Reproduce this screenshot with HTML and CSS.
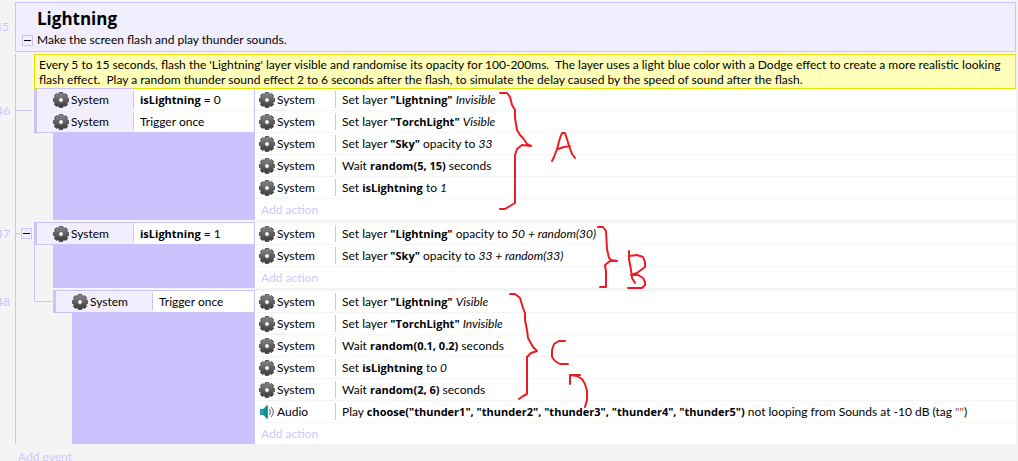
FILE: index.html
```
<!DOCTYPE html>
<html lang="en">
<head>
<meta charset="utf-8">
<title>Event sheet</title>
<link rel="stylesheet" href="styles.css">
</head>
<body>
<svg class="defs" aria-hidden="true">
  <defs>
    <linearGradient id="metal" x1="0" y1="0" x2="0" y2="1">
      <stop offset="0" stop-color="#8a8a8a"/>
      <stop offset="1" stop-color="#383838"/>
    </linearGradient>
    <linearGradient id="teal" x1="0" y1="0" x2="1" y2="0">
      <stop offset="0" stop-color="#12b4c4"/>
      <stop offset="1" stop-color="#0a8496"/>
    </linearGradient>
    <symbol id="gear" viewBox="0 0 16 16">
      <path fill="url(#metal)" stroke="#404040" stroke-width=".8" stroke-linejoin="round" d="M6.300 .5h3.400l.4 1.500 1 .4 1.500-.8 2 2-.8 1.500.4 1 1.500.3v3.200l-1.500.4-.4 1 .8 1.500-2 2-1.500-.8-1 .4-.4 1.500H6.300l-.4-1.500-1-.4-1.500.8-2-2 .8-1.500-.4-1L.5 9.600V6.400L1.900 6.100l.4-1-.8-1.500 2-2 1.500.8 1-.4z"/>
      <circle cx="8" cy="8" r="2.400" fill="#fff" stroke="#4a4a4a" stroke-width=".8"/>
    </symbol>
    <symbol id="speaker" viewBox="0 0 16 16">
      <path fill="url(#teal)" stroke="#12707c" stroke-width=".8" stroke-linejoin="round" d="M1.400 5.400h2.800L8.300 1.400v13.200L4.200 10.600H1.400z"/>
      <path fill="none" stroke="#777" stroke-width="1.200" stroke-linecap="round" d="M10.500 5.500q1.700 2.500 0 5M12.500 3.500q3.600 4.500 0 9"/>
    </symbol>
  </defs>
</svg>
<main class="sheet">
  <section class="group">
    <span class="number">45</span>
    <div class="group-box">
      <h1 class="group-title">Lightning</h1>
      <button class="toggle" type="button" aria-label="Collapse group"></button>
      <p class="group-text">Make the screen flash and play thunder sounds.</p>
    </div>
  </section>

  <div class="events">
    <p class="comment">Every 5 to 15 seconds, flash the 'Lightning' layer visible and randomise its opacity for 100-200ms.&nbsp; The layer uses a light blue color with a Dodge effect to create a more realistic looking flash effect.&nbsp; Play a random thunder sound effect 2 to 6 seconds after the flash, to simulate the delay caused by the speed of sound after the flash.</p>

    <article class="event">
      <div class="left">
        <div class="head">
          <span class="number">46</span>
          <span class="lead"><span class="tick"></span></span>
          <div class="conditions">
            <div class="condition"><span class="object"><svg class="icon"><use href="#gear"/></svg>System</span><span class="test"><b>isLightning</b> = 0</span></div>
            <div class="condition"><span class="object"><svg class="icon"><use href="#gear"/></svg>System</span><span class="test">Trigger once</span></div>
          </div>
        </div>
        <div class="body"><span class="fill"></span></div>
      </div>
      <div class="actions">
        <div class="action"><span class="object"><svg class="icon"><use href="#gear"/></svg>System</span><span class="task">Set layer <b>"Lightning"</b> <i>Invisible</i></span></div>
        <div class="action"><span class="object"><svg class="icon"><use href="#gear"/></svg>System</span><span class="task">Set layer <b>"TorchLight"</b> <i>Visible</i></span></div>
        <div class="action"><span class="object"><svg class="icon"><use href="#gear"/></svg>System</span><span class="task">Set layer <b>"Sky"</b> opacity to <i>33</i></span></div>
        <div class="action"><span class="object"><svg class="icon"><use href="#gear"/></svg>System</span><span class="task">Wait <b>random(5, 15)</b> seconds</span></div>
        <div class="action"><span class="object"><svg class="icon"><use href="#gear"/></svg>System</span><span class="task">Set <b>isLightning</b> to <i>1</i></span></div>
        <div class="action"><button class="add" type="button">Add action</button></div>
      </div>
    </article>

    <article class="event">
      <div class="left">
        <div class="head">
          <span class="number">47</span>
          <span class="lead"><span class="tick"></span><button class="toggle" type="button" aria-label="Collapse event"></button></span>
          <div class="conditions">
            <div class="condition"><span class="object"><svg class="icon"><use href="#gear"/></svg>System</span><span class="test"><b>isLightning</b> = 1</span></div>
          </div>
        </div>
        <div class="body parent"><span class="fill"></span></div>
      </div>
      <div class="actions">
        <div class="action"><span class="object"><svg class="icon"><use href="#gear"/></svg>System</span><span class="task">Set layer <b>"Lightning"</b> opacity to <i>50 + random(30)</i></span></div>
        <div class="action"><span class="object"><svg class="icon"><use href="#gear"/></svg>System</span><span class="task">Set layer <b>"Sky"</b> opacity to <i>33 + random(33)</i></span></div>
        <div class="action"><button class="add" type="button">Add action</button></div>
      </div>
    </article>

    <article class="event child">
      <div class="left">
        <div class="head">
          <span class="number">48</span>
          <span class="lead"></span>
          <span class="elbow"></span>
          <div class="conditions">
            <div class="condition"><span class="object"><svg class="icon"><use href="#gear"/></svg>System</span><span class="test">Trigger once</span></div>
          </div>
        </div>
        <div class="body"><span class="fill"></span></div>
      </div>
      <div class="actions">
        <div class="action"><span class="object"><svg class="icon"><use href="#gear"/></svg>System</span><span class="task">Set layer <b>"Lightning"</b> <i>Visible</i></span></div>
        <div class="action"><span class="object"><svg class="icon"><use href="#gear"/></svg>System</span><span class="task">Set layer <b>"TorchLight"</b> <i>Invisible</i></span></div>
        <div class="action"><span class="object"><svg class="icon"><use href="#gear"/></svg>System</span><span class="task">Wait <b>random(0.1, 0.2)</b> seconds</span></div>
        <div class="action"><span class="object"><svg class="icon"><use href="#gear"/></svg>System</span><span class="task">Set <b>isLightning</b> to <i>0</i></span></div>
        <div class="action"><span class="object"><svg class="icon"><use href="#gear"/></svg>System</span><span class="task">Wait <b>random(2, 6)</b> seconds</span></div>
        <div class="action"><span class="object"><svg class="icon"><use href="#speaker"/></svg>Audio</span><span class="task">Play <b>choose("thunder1", "thunder2", "thunder3", "thunder4", "thunder5")</b> not looping from Sounds at -10 dB (tag <span class="string">""</span>)</span></div>
        <div class="action"><button class="add" type="button">Add action</button></div>
      </div>
    </article>
  </div>
  <button class="add add-event" type="button">Add event</button>

  <svg class="marks" width="1018" height="461" viewBox="0 0 1018 461" role="img" aria-label="Handwritten notes A, B and C">
    <path d="M500 93L507 93L510 97L512 105L515 110L515 118L517 130L520 135L523 138L527 144L531 146L522 145L517 149L515 155L515 203L510 206L505 209L500 209"/>
    <path d="M552 161L554 157L557 149L560 138L562 133L565 133L567 139L569 146L572 154L575 158M558 149L564 147L570 146"/>
    <path d="M598 227L603 227L606 231L607 249L609 258L611 260L617 261L610 261L605 265L606 272L606 287L600 287"/>
    <path d="M629 251L629 259L631 270L632 278L635 283M629 256L637 255L643 257L645 262L645 267L641 270L637 273L631 275L638 275L643 278L645 282L645 285L642 288L628 288"/>
    <path d="M510 294L515 294L520 298L523 308L525 313L525 320L527 330L528 338L533 347L537 351L531 353L527 357L527 394L523 396L519 399"/>
    <path d="M565 341L559 341L554 344L552 350L552 357L555 361L560 364L568 364"/>
    <path d="M585 407L587 400L587 391L585 384L582 379L577 376L570 375L570 384M570 375L580 375"/>
  </svg>
</main>
</body>
</html>
```
FILE: styles.css
```
:root {
  --line: #ccc3fe;
  --soft: #f1effe;
  --page: #f4f4f4;
}

* {
  box-sizing: border-box;
}

html {
  overflow: hidden;
}

body {
  margin: 0;
  background: var(--page);
  color: #000;
  font: 12px/16px Lato, "Open Sans", sans-serif;
}

h1,
p {
  margin: 0;
}

b {
  font-family: "Open Sans", sans-serif;
  font-size: 11px;
}

button {
  padding: 0;
  border: 0;
  background: none;
  font: inherit;
}

.defs {
  position: absolute;
  width: 0;
  height: 0;
}

.sheet {
  position: relative;
  padding: 2px 2px 0 15px;
}

.number {
  flex: none;
  width: 16px;
  margin: 0 6px 0 -22px;
  color: var(--line);
  text-align: right;
}

/* Group header */

.group {
  display: flex;
  align-items: center;
}

.group-box {
  flex: 1;
  display: grid;
  grid-template-columns: 11px 1fr;
  gap: 1px 4px;
  align-items: center;
  padding: 3px 6px;
  border: 1px solid var(--line);
  background: var(--soft);
}

.group-title {
  grid-column: 2;
  font-family: "Open Sans", sans-serif;
  font-size: 17px;
  line-height: 25px;
}

.toggle {
  display: flex;
  align-items: center;
  justify-content: center;
  width: 11px;
  height: 11px;
  border: 1px solid var(--line);
  background: var(--soft);
}

.toggle::before {
  content: "";
  width: 7px;
  height: 1px;
  background: #000;
}

/* Events */

.events {
  display: flex;
  flex-direction: column;
  gap: 2px;
  margin-top: 2px;
  border-left: 1px solid var(--line);
}

.comment {
  position: relative;
  margin: 0 0 -3px 18px;
  padding: 2px 4px 1px;
  border: 1px solid #e6e600;
  background: #ffffb9;
  line-height: 15px;
}

.event {
  display: flex;
}

.left {
  flex: none;
  display: flex;
  flex-direction: column;
  width: 239px;
}

.head {
  display: flex;
  align-items: center;
}

.lead {
  flex: none;
  display: flex;
  align-items: center;
  gap: 1px;
  width: 18px;
  padding-right: 2px;
}

.tick {
  flex: 1;
  height: 1px;
  background: var(--line);
}

.elbow {
  flex: none;
  align-self: flex-start;
  width: 18px;
  height: 14px;
  margin: -2px 1px 0 0;
  border: solid var(--line);
  border-width: 0 0 1px 1px;
}

.conditions {
  flex: 1;
  border: solid var(--line);
  border-width: 0 1px 1px 3px;
  background: var(--soft);
}

.condition {
  display: flex;
  height: 22px;
}

.condition .object {
  width: 97px;
  padding-left: 16px;
  border-top: 1px solid var(--soft);
}

.test {
  flex: 1;
  padding-left: 6px;
  border-top: 1px solid var(--page);
  background: #fff;
  line-height: 22px;
}

.condition:first-child > * {
  border-top-color: var(--line);
}

.object {
  position: relative;
  flex: none;
  display: flex;
  align-items: center;
  gap: 2px;
}

.object::after {
  content: "";
  position: absolute;
  top: 2px;
  right: 0;
  bottom: 2px;
  width: 1px;
  background: var(--line);
}

.icon {
  flex: none;
  width: 16px;
  height: 16px;
}

.body {
  flex: 1;
  display: flex;
  padding-left: 37px;
}

.child .body {
  padding-left: 56px;
}

.parent {
  position: relative;
}

.parent::before {
  content: "";
  position: absolute;
  top: 0;
  bottom: 0;
  left: 18px;
  width: 1px;
  background: var(--line);
}

.fill {
  flex: 1;
  background: var(--line);
}

.actions {
  flex: 1;
  background: #fff;
}

.action {
  display: flex;
  align-items: center;
  height: 22px;
  border-top: 1px solid var(--page);
}

.action .object {
  align-self: stretch;
  width: 81px;
  padding-left: 4px;
}

.task {
  padding-left: 6px;
  white-space: nowrap;
}

.string {
  color: #a0522d;
}

.add {
  margin-left: 6px;
  color: #d0c8fe;
}

.add-event {
  display: block;
  margin: 5px 0 0 3px;
}

.marks {
  position: absolute;
  top: 0;
  left: 0;
  pointer-events: none;
}

.marks path {
  fill: none;
  stroke: #ed1c24;
  stroke-width: 2;
  stroke-linecap: round;
  stroke-linejoin: round;
}
```
